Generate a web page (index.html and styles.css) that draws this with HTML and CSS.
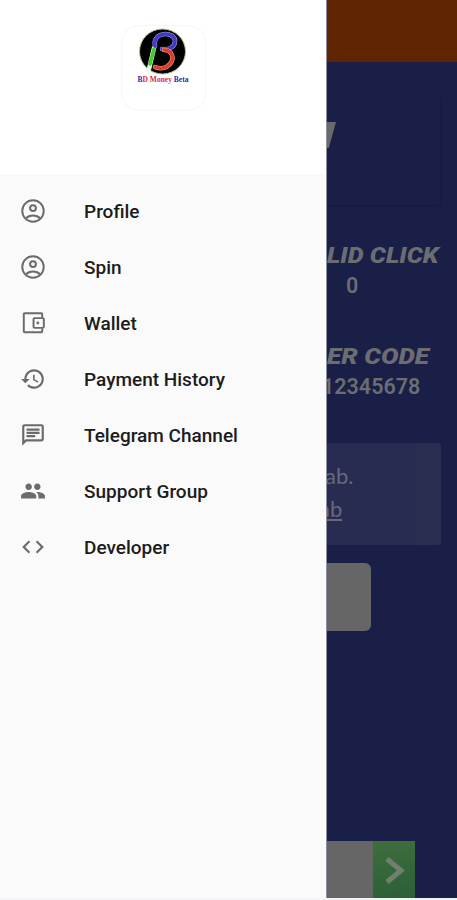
FILE: index.html
```html
<!DOCTYPE html>
<html lang="en">

<head>
    <meta charset="UTF-8">
    <meta name="viewport" content="width=device-width, initial-scale=1.0">
    <title>BD Money Beta</title>
    <link rel="stylesheet" href="styles.css">
</head>

<body>
    <!-- Home screen, dimmed behind the drawer -->
    <div class="screen">
        <div class="toolbar"></div>

        <div class="hero"><span class="hero-mark"></span></div>

        <div class="stat stat-click">
            <h3>LID CLICK</h3>
            <p>0</p>
        </div>
        <div class="stat stat-code">
            <h3>ER CODE</h3>
            <p>12345678</p>
        </div>

        <div class="notice">
            <p>ab.</p>
            <p class="notice-link"><u>ab</u></p>
        </div>

        <div class="action"></div>

        <div class="banner">
            <div class="banner-arrow">
                <svg width="22" height="30" viewBox="0 0 22 30"><path d="M4 4L18 15.500L4 27" fill="none" stroke="#70806f" stroke-width="5"/></svg>
            </div>
        </div>
    </div>

    <!-- Navigation drawer -->
    <nav class="drawer">
        <div class="drawer-header">
            <div class="logo">
                <svg width="50" height="48" viewBox="0 0 50 48">
                    <ellipse cx="24.500" cy="23.500" rx="23" ry="22.500" fill="#000" stroke="#b9bd8b" stroke-width="1"/>
                    <g fill="none" stroke-linecap="round">
                        <path d="M16 20L11 41" stroke="#e9f7dc" stroke-width="4.500"/>
                        <path d="M16 21L12 36" stroke="#3ecb2c" stroke-width="3.500"/>
                        <path d="M17 18C14 3 37 3 37 13C37 19 31 22 24 21" stroke="#aaa9ee" stroke-width="4.500"/>
                        <path d="M17 18C14 3 37 3 37 13C37 19 31 22 24 21" stroke="#4038c8" stroke-width="3.500"/>
                        <path d="M26 22C34 22 37 30 32 36C28 41 21 41 17 39" stroke="#eda18f" stroke-width="4.500"/>
                        <path d="M26 22C34 22 37 30 32 36C28 41 21 41 17 39" stroke="#dc3e27" stroke-width="3.500"/>
                    </g>
                </svg>
                <div class="logo-name"><span class="blue">B</span><span class="red">D Money</span> <span class="blue">Beta</span></div>
            </div>
        </div>

        <ul class="menu">
            <li>
                <svg viewBox="0 0 24 24"><g fill="none" stroke="currentColor" stroke-width="1.800"><circle cx="12" cy="12" r="9.900"/><circle cx="12" cy="9.300" r="2.700"/><path d="M5.500 18.800C8.500 15.300 15.500 15.300 18.500 18.800"/></g></svg>
                <span>Profile</span>
            </li>
            <li>
                <svg viewBox="0 0 24 24"><g fill="none" stroke="currentColor" stroke-width="1.800"><circle cx="12" cy="12" r="9.900"/><circle cx="12" cy="9.300" r="2.700"/><path d="M5.500 18.800C8.500 15.300 15.500 15.300 18.500 18.800"/></g></svg>
                <span>Spin</span>
            </li>
            <li>
                <svg viewBox="0 0 24 24"><g fill="none" stroke="currentColor" stroke-width="1.800"><path d="M20.500 7V3.800Q20.500 3 19.700 3H4.300Q3.500 3 3.500 3.800V19.700Q3.500 20.500 4.300 20.500H19.700Q20.500 20.500 20.500 19.700V17"/><rect x="12.500" y="7.500" width="9.500" height="9" rx="1"/></g><circle cx="16.500" cy="12" r="1.300" fill="currentColor"/></svg>
                <span>Wallet</span>
            </li>
            <li>
                <svg viewBox="0 0 24 24"><path fill="currentColor" d="M13 3c-4.970 0-9 4.030-9 9H1l3.890 3.890.07.140L9 12H6c0-3.870 3.130-7 7-7s7 3.130 7 7-3.130 7-7 7c-1.930 0-3.680-.790-4.940-2.060l-1.420 1.420C8.270 19.990 10.510 21 13 21c4.970 0 9-4.030 9-9s-4.030-9-9-9zm-1 5v5l4.250 2.520.770-1.280-3.520-2.090V8z"/></svg>
                <span>Payment History</span>
            </li>
            <li>
                <svg viewBox="0 0 24 24"><path fill="currentColor" d="M4 4h16v12H5.170L4 17.170V4m0-2c-1.100 0-1.990.900-1.990 2L2 22l4-4h14c1.100 0 2-.900 2-2V4c0-1.100-.900-2-2-2H4zm2 10h8v2H6v-2zm0-3h12v2H6V9zm0-3h12v2H6V6z"/></svg>
                <span>Telegram Channel</span>
            </li>
            <li>
                <svg viewBox="0 0 24 24"><path fill="currentColor" d="M16 11c1.660 0 2.990-1.340 2.990-3S17.660 5 16 5s-3 1.340-3 3 1.340 3 3 3zm-8 0c1.660 0 2.990-1.340 2.990-3S9.660 5 8 5 5 6.340 5 8s1.340 3 3 3zm0 2c-2.330 0-7 1.170-7 3.500V19h14v-2.500c0-2.330-4.670-3.500-7-3.500zm8 0c-.290 0-.620.020-.970.050 1.160.840 1.970 1.970 1.970 3.450V19h6v-2.500c0-2.330-4.670-3.500-7-3.500z"/></svg>
                <span>Support Group</span>
            </li>
            <li>
                <svg viewBox="0 0 24 24"><path fill="currentColor" d="M9.400 16.600L4.800 12l4.600-4.600L8 6l-6 6 6 6 1.400-1.400zm5.200 0l4.600-4.600-4.600-4.600L16 6l6 6-6 6-1.400-1.400z"/></svg>
                <span>Developer</span>
            </li>
        </ul>
    </nav>
</body>

</html>
```
FILE: styles.css
```css
* {
    box-sizing: border-box;
}

body {
    margin: 0;
    position: relative;
    height: 900px;
    overflow: hidden;
    background: #f4f4f6;
    font-family: Roboto, sans-serif;
}

h3,
p {
    margin: 0;
}

/* Home screen */
.screen {
    display: flex;
    flex-direction: column;
    height: 898px;
    padding-left: 327px;
    background: #191f46;
    color: #6c6d72;
}

.toolbar {
    height: 62px;
    margin-bottom: 36px;
    background: #5f2400;
}

.hero {
    height: 107px;
    margin-right: 17px;
    padding-top: 24px;
    border-radius: 0 0 5px 0;
    box-shadow: 1px 1px 2px #141a40;
}

.hero-mark {
    display: block;
    width: 9px;
    height: 26px;
    background: #686b6a;
    clip-path: polygon(0 0, 100% 0, 20% 100%, 0 100%);
}

.stat {
    white-space: nowrap;
}

.stat h3 {
    width: fit-content;
    height: 30px;
    font-size: 22px;
    font-weight: 900;
    font-style: italic;
    line-height: 31px;
    transform: scaleX(1.15);
    transform-origin: left;
}

.stat p {
    height: 32px;
    font-size: 21.500px;
    font-weight: 600;
    line-height: 32px;
}

.stat-click {
    margin-top: 35px;
}

.stat-click p {
    padding-left: 19px;
}

.stat-code {
    margin-top: 39px;
}

.stat-code h3 {
    transform: scaleX(1.19);
}

.stat-code p {
    margin-left: -5px;
}

.notice {
    height: 102px;
    margin: 40px 16px 18px 0;
    padding-top: 16px;
    border-radius: 0 4px 4px 0;
    background: linear-gradient(90deg, #282c50 78%, #282f50 78%);
    color: #66687e;
    font-family: Lato, sans-serif;
    font-size: 22px;
    line-height: 33px;
}

.notice p {
    margin-left: -2px;
}

.notice .notice-link {
    margin-left: -8px;
}

.action {
    width: 44px;
    height: 68px;
    border-radius: 0 6px 6px 0;
    background: #666;
}

.banner {
    display: flex;
    justify-content: flex-end;
    width: 88px;
    height: 57px;
    margin-top: auto;
    background: #666;
}

.banner-arrow {
    display: flex;
    align-items: center;
    justify-content: center;
    width: 42px;
    background: linear-gradient(170deg, #3f6e3e, #2b5f36);
}

/* Drawer */
.drawer {
    position: absolute;
    top: 0;
    left: 0;
    width: 327px;
    height: 898px;
    border-right: 1px solid #8d90a0;
    background: #fafafa;
}

.drawer-header {
    display: flex;
    justify-content: center;
    height: 174px;
    padding-top: 25px;
    background: #fff;
}

.logo {
    display: flex;
    flex-direction: column;
    align-items: center;
    width: 85px;
    height: 86px;
    padding-top: 2px;
    border: 1px solid #f6f6f6;
    border-radius: 18px;
}

.logo-name {
    margin-top: -1px;
    font: bold 7.500px/9px "Liberation Serif", serif;
    white-space: nowrap;
}

.blue {
    color: #3328b5;
}

.red {
    color: #d72c42;
}

.menu {
    margin: 0;
    padding: 9px 0 0;
    list-style: none;
}

.menu li {
    display: flex;
    align-items: center;
    gap: 38px;
    height: 56px;
    padding-left: 20px;
    color: #1c1c1c;
    font-size: 19px;
    font-weight: 500;
}

.menu svg {
    width: 26px;
    height: 26px;
    color: #6b6b6b;
}
```
